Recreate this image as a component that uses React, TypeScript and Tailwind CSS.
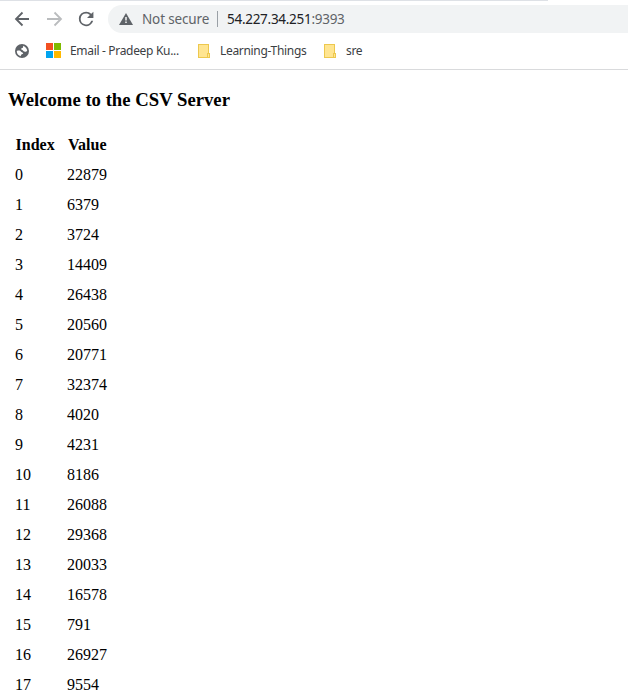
import React from "react";

const values = [22879, 6379, 3724, 14409, 26438, 20560, 20771, 32374, 4020, 4231, 8186, 26088, 29368, 20033, 16578, 791, 26927, 9554];

const Folder = () => (
  <svg width="13" height="14" viewBox="0 0 13 14" className="shrink-0" shapeRendering="crispEdges">
    <path d="M.5.5h10v13H.5z" fill="#ffe591" stroke="#edc84e" />
    <path d="M9.5 9.5h2v4h-2z" fill="#ffe591" stroke="#edc84e" />
  </svg>
);

export default function App() {
  return (
    <div className="h-[695px] w-[628px] overflow-hidden bg-white">
      <header className="border-b border-[#d9dadc] font-['Noto_Sans',sans-serif]">
        <div className="h-px w-[548px] bg-[#dee1e6]" />
        <div className="flex h-[36px] items-center pl-3">
          <svg width="96" height="20" viewBox="0 0 96 20" fill="none" className="shrink-0">
            <path d="M17 10H4.500M10.500 3.500 4 10l6.500 6.500" stroke="#5f6368" strokeWidth="1.800" />
            <path d="M35 10h12.500M42.500 3.500 49 10l-6.500 6.500" stroke="#babcbe" strokeWidth="1.800" />
            <path transform="translate(63.200 -1) scale(.91)" d="M17.650 6.350A7.960 7.960 0 0 0 12 4a8 8 0 1 0 7.730 10h-2.080A6 6 0 1 1 12 6c1.660 0 3.140.690 4.220 1.780L13 11h7V4z" fill="#5f6368" />
          </svg>
          <div className="flex h-7 flex-1 items-center rounded-l-full bg-[#f1f3f4] pl-[11px] text-[13.5px]">
            <svg width="14" height="12" viewBox="0 0 14 12"><path d="M7 0 14 12H0z" fill="#5f6368" /><path d="M7 4v3.500M7 8.500v1.500" stroke="#fff" strokeWidth="1.400" /></svg>
            <span className="ml-[9px] w-[68px] tracking-[-0.15px] whitespace-nowrap text-[#5f6368]">Not secure</span>
            <span className="ml-[7px] h-4 w-px bg-[#9aa0a6]" />
            <span className="ml-[9px] tracking-[-0.28px] text-[#202124]">54.227.34.251<span className="text-[#5f6368]">:9393</span></span>
          </div>
        </div>
        <div className="flex h-8 items-center pb-1 pl-[15px] text-xs tracking-[-0.32px] text-[#3c4043]">
          <svg width="14" height="14" viewBox="0 0 24 24"><circle cx="12" cy="12" r="12" fill="#5f6368" /><path d="M3 12c3-1 6-1 7 1s4 1 4 3-2 1-3 2-1 2-1 3C6 20 3 17 3 12zM14 3c3 1 6 4 7 8-1 2-3 3-5 2-2 0-2-2-4-3-2 0-2-2 0-3 2 0 2-2 2-4z" fill="#fff" /></svg>
          <div className="mb-px ml-[17px] grid grid-cols-2 gap-px"><i className="size-[7px] bg-[#f25022]" /><i className="size-[7px] bg-[#7fba00]" /><i className="size-[7px] bg-[#00a4ef]" /><i className="size-[7px] bg-[#ffb900]" /></div>
          <span className="ml-[9px] w-[128px] whitespace-nowrap">Email - Pradeep Ku...</span>
          <Folder /><span className="ml-[9px] w-[104px] whitespace-nowrap">Learning-Things</span>
          <Folder /><span className="ml-[9px]">sre</span>
        </div>
      </header>
      <main className="px-2 font-['Liberation_Serif',serif] text-black">
        <h1 className="pt-[19px] text-[18.72px] leading-[21px] font-bold">Welcome to the CSV Server</h1>
        <table className="mt-5 border-collapse text-base leading-[18px]">
          <thead><tr className="h-[30px]"><th className="w-[52px] pl-[7.5px] text-left">Index</th><th className="pl-2 text-left">Value</th></tr></thead>
          <tbody>{values.map((v, i) => <tr key={i} className="h-[30px]"><td className="pl-[7px]">{i}</td><td className="pl-[7px]">{v}</td></tr>)}</tbody>
        </table>
      </main>
    </div>
  );
}
